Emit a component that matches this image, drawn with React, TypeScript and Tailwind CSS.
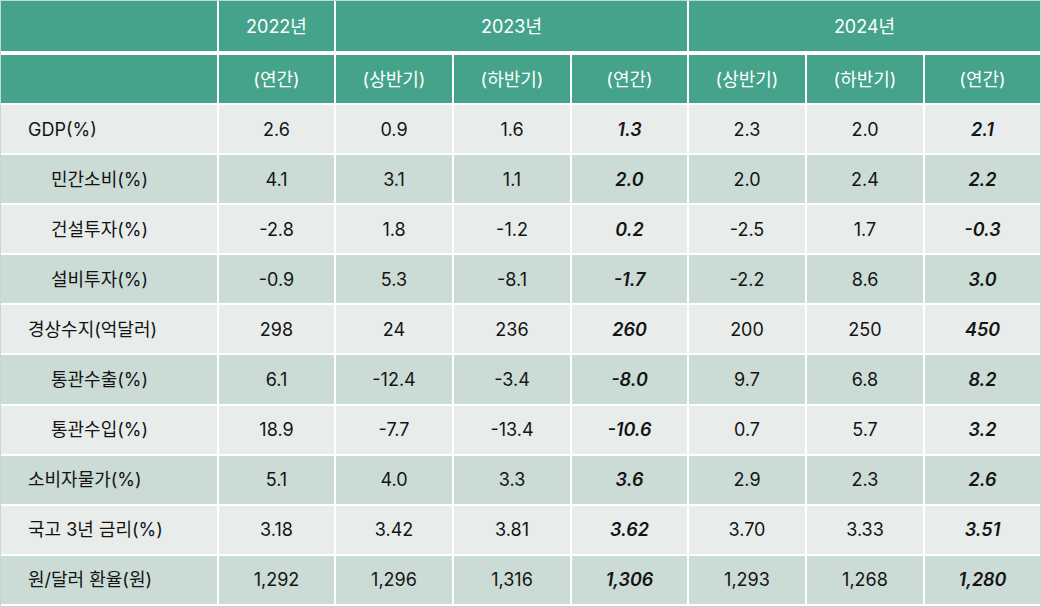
const cols = "grid grid-cols-[216px_115px_116px_116px_115px_116px_116px_115px] gap-x-[2px]";

type Row = { label: string; indent?: boolean; values: string[] };

const rows: Row[] = [
  { label: "GDP(%)", values: ["2.6", "0.9", "1.6", "1.3", "2.3", "2.0", "2.1"] },
  { label: "민간소비(%)", indent: true, values: ["4.1", "3.1", "1.1", "2.0", "2.0", "2.4", "2.2"] },
  { label: "건설투자(%)", indent: true, values: ["-2.8", "1.8", "-1.2", "0.2", "-2.5", "1.7", "-0.3"] },
  { label: "설비투자(%)", indent: true, values: ["-0.9", "5.3", "-8.1", "-1.7", "-2.2", "8.6", "3.0"] },
  { label: "경상수지(억달러)", values: ["298", "24", "236", "260", "200", "250", "450"] },
  { label: "통관수출(%)", indent: true, values: ["6.1", "-12.4", "-3.4", "-8.0", "9.7", "6.8", "8.2"] },
  { label: "통관수입(%)", indent: true, values: ["18.9", "-7.7", "-13.4", "-10.6", "0.7", "5.7", "3.2"] },
  { label: "소비자물가(%)", values: ["5.1", "4.0", "3.3", "3.6", "2.9", "2.3", "2.6"] },
  { label: "국고 3년 금리(%)", values: ["3.18", "3.42", "3.81", "3.62", "3.70", "3.33", "3.51"] },
  { label: "원/달러 환율(원)", values: ["1,292", "1,296", "1,316", "1,306", "1,293", "1,268", "1,280"] },
];

// annual columns are emphasised
const bold = [3, 6];
const subHeads = ["(연간)", "(상반기)", "(하반기)", "(연간)", "(상반기)", "(하반기)", "(연간)"];

export default function App() {
  return (
    <div
      className="w-[1041px] h-[607px] bg-white border border-[#c7d8d1] text-[18px] text-[#141414]"
      style={{ fontFamily: 'Inter, "Noto Sans CJK KR", sans-serif' }}
    >
      <div className="flex flex-col gap-[2px]">
        <div className={`${cols} h-[50px] mb-[2px] text-white`}>
          <div className="bg-[#44a38a]" />
          <div className="bg-[#44a38a] flex items-center justify-center">2022년</div>
          <div className="col-span-3 bg-[#44a38a] flex items-center justify-center">2023년</div>
          <div className="col-span-3 bg-[#44a38a] flex items-center justify-center">2024년</div>
        </div>
        <div className={`${cols} h-[48px] text-white`}>
          <div className="bg-[#44a38a]" />
          {subHeads.map((h, i) => (
            <div key={i} className="bg-[#44a38a] flex items-center justify-center">
              {h}
            </div>
          ))}
        </div>
        {rows.map((r, i) => {
          const bg = i % 2 === 0 ? "bg-[#e8edeb]" : "bg-[#cbdbd5]";
          return (
            <div key={r.label} className={`${cols} h-[48.1px]`}>
              <div className={`${bg} flex items-center ${r.indent ? "pl-[50px]" : "pl-[27px]"}`}>{r.label}</div>
              {r.values.map((v, j) => (
                <div
                  key={j}
                  className={`${bg} flex items-center justify-center ${bold.includes(j) ? "font-semibold italic" : ""}`}
                >
                  {v}
                </div>
              ))}
            </div>
          );
        })}
      </div>
    </div>
  );
}
